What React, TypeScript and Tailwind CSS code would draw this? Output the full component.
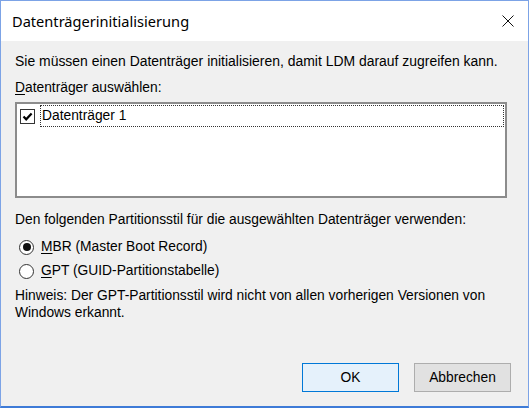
import React from "react";

const body = { fontFamily: '"Liberation Sans", Arial, sans-serif' };

function Check() {
  return (
    <div className="w-[15px] h-[15px] border border-[#333] bg-white flex items-center justify-center shrink-0">
      <svg width="11" height="11" viewBox="0 0 11 11">
        <path d="M1.5 5.5 L4.2 8.3 L9.6 2.6" fill="none" stroke="#000" strokeWidth="2.2" />
      </svg>
    </div>
  );
}

function Radio({ on }: { on?: boolean }) {
  return (
    <div className="w-[15px] h-[15px] rounded-full border border-[#333] bg-white flex items-center justify-center shrink-0">
      {on && <div className="w-[8px] h-[8px] rounded-full bg-[#111]" />}
    </div>
  );
}

export default function App() {
  return (
    <div
      className="w-[529px] h-[408px] flex flex-col border-x border-t border-[#7ca3e6] border-b-2 border-b-[#3e7bd7] overflow-hidden"
      style={body}
    >
      <div className="h-[40px] bg-white flex items-center shrink-0">
        <div
          className="pl-[11px] text-[14.6px] text-black flex-1 pt-[2px]"
          style={{ fontFamily: '"Noto Sans", "Open Sans", sans-serif' }}
        >
          Datenträgerinitialisierung
        </div>
        <div className="w-[40px] h-[40px] flex items-center justify-center">
          <svg width="12" height="12" viewBox="0 0 12 12">
            <path d="M0.5 0.5 L11.5 11.5 M11.5 0.5 L0.5 11.5" stroke="#111" strokeWidth="1" />
          </svg>
        </div>
      </div>
      <div className="flex-1 bg-[#f0f0f0] pl-[14px] pt-[12px] text-[13.8px] leading-[16px] text-black flex flex-col">
        <div className="text-[13.95px]">Sie müssen einen Datenträger initialisieren, damit LDM darauf zugreifen kann.</div>
        <div className="mt-[11px]">
          <span className="underline underline-offset-2">D</span>atenträger auswählen:
        </div>
        <div className="mt-[6px] w-[492px] h-[96px] bg-white border-2 border-[#8c8c8c] pt-[1px] pl-[2px] pr-[1px]">
          <div className="flex items-center h-[22px]">
            <div className="w-[21px] flex items-center justify-start pl-[1px]">
              <Check />
            </div>
            <div className="flex-1 h-[22px] border border-dotted border-[#333] flex items-center pl-[1px]">
              Datenträger 1
            </div>
          </div>
        </div>
        <div className="mt-[14px]">Den folgenden Partitionsstil für die ausgewählten Datenträger verwenden:</div>
        <div className="mt-[9px] flex items-center h-[20px] pl-[4px] gap-[7px]">
          <Radio on />
          <span>
            <span className="underline underline-offset-2">M</span>BR (Master Boot Record)
          </span>
        </div>
        <div className="mt-[4px] flex items-center h-[20px] pl-[4px] gap-[7px]">
          <Radio />
          <span>
            <span className="underline underline-offset-2">G</span>PT (GUID-Partitionstabelle)
          </span>
        </div>
        <div className="mt-[6px] leading-[17px]">
          Hinweis: Der GPT-Partitionsstil wird nicht von allen vorherigen Versionen von
          <br />
          Windows erkannt.
        </div>
        <div className="flex-1" />
        <div className="flex justify-end gap-[15px] pr-[17px] mb-[14px]">
          <div className="w-[97px] h-[29px] border border-[#0078d7] bg-[#e5f1fb] flex items-center justify-center">
            OK
          </div>
          <div className="w-[97px] h-[29px] border border-[#adadad] bg-[#e1e1e1] flex items-center justify-center">
            Abbrechen
          </div>
        </div>
      </div>
    </div>
  );
}
